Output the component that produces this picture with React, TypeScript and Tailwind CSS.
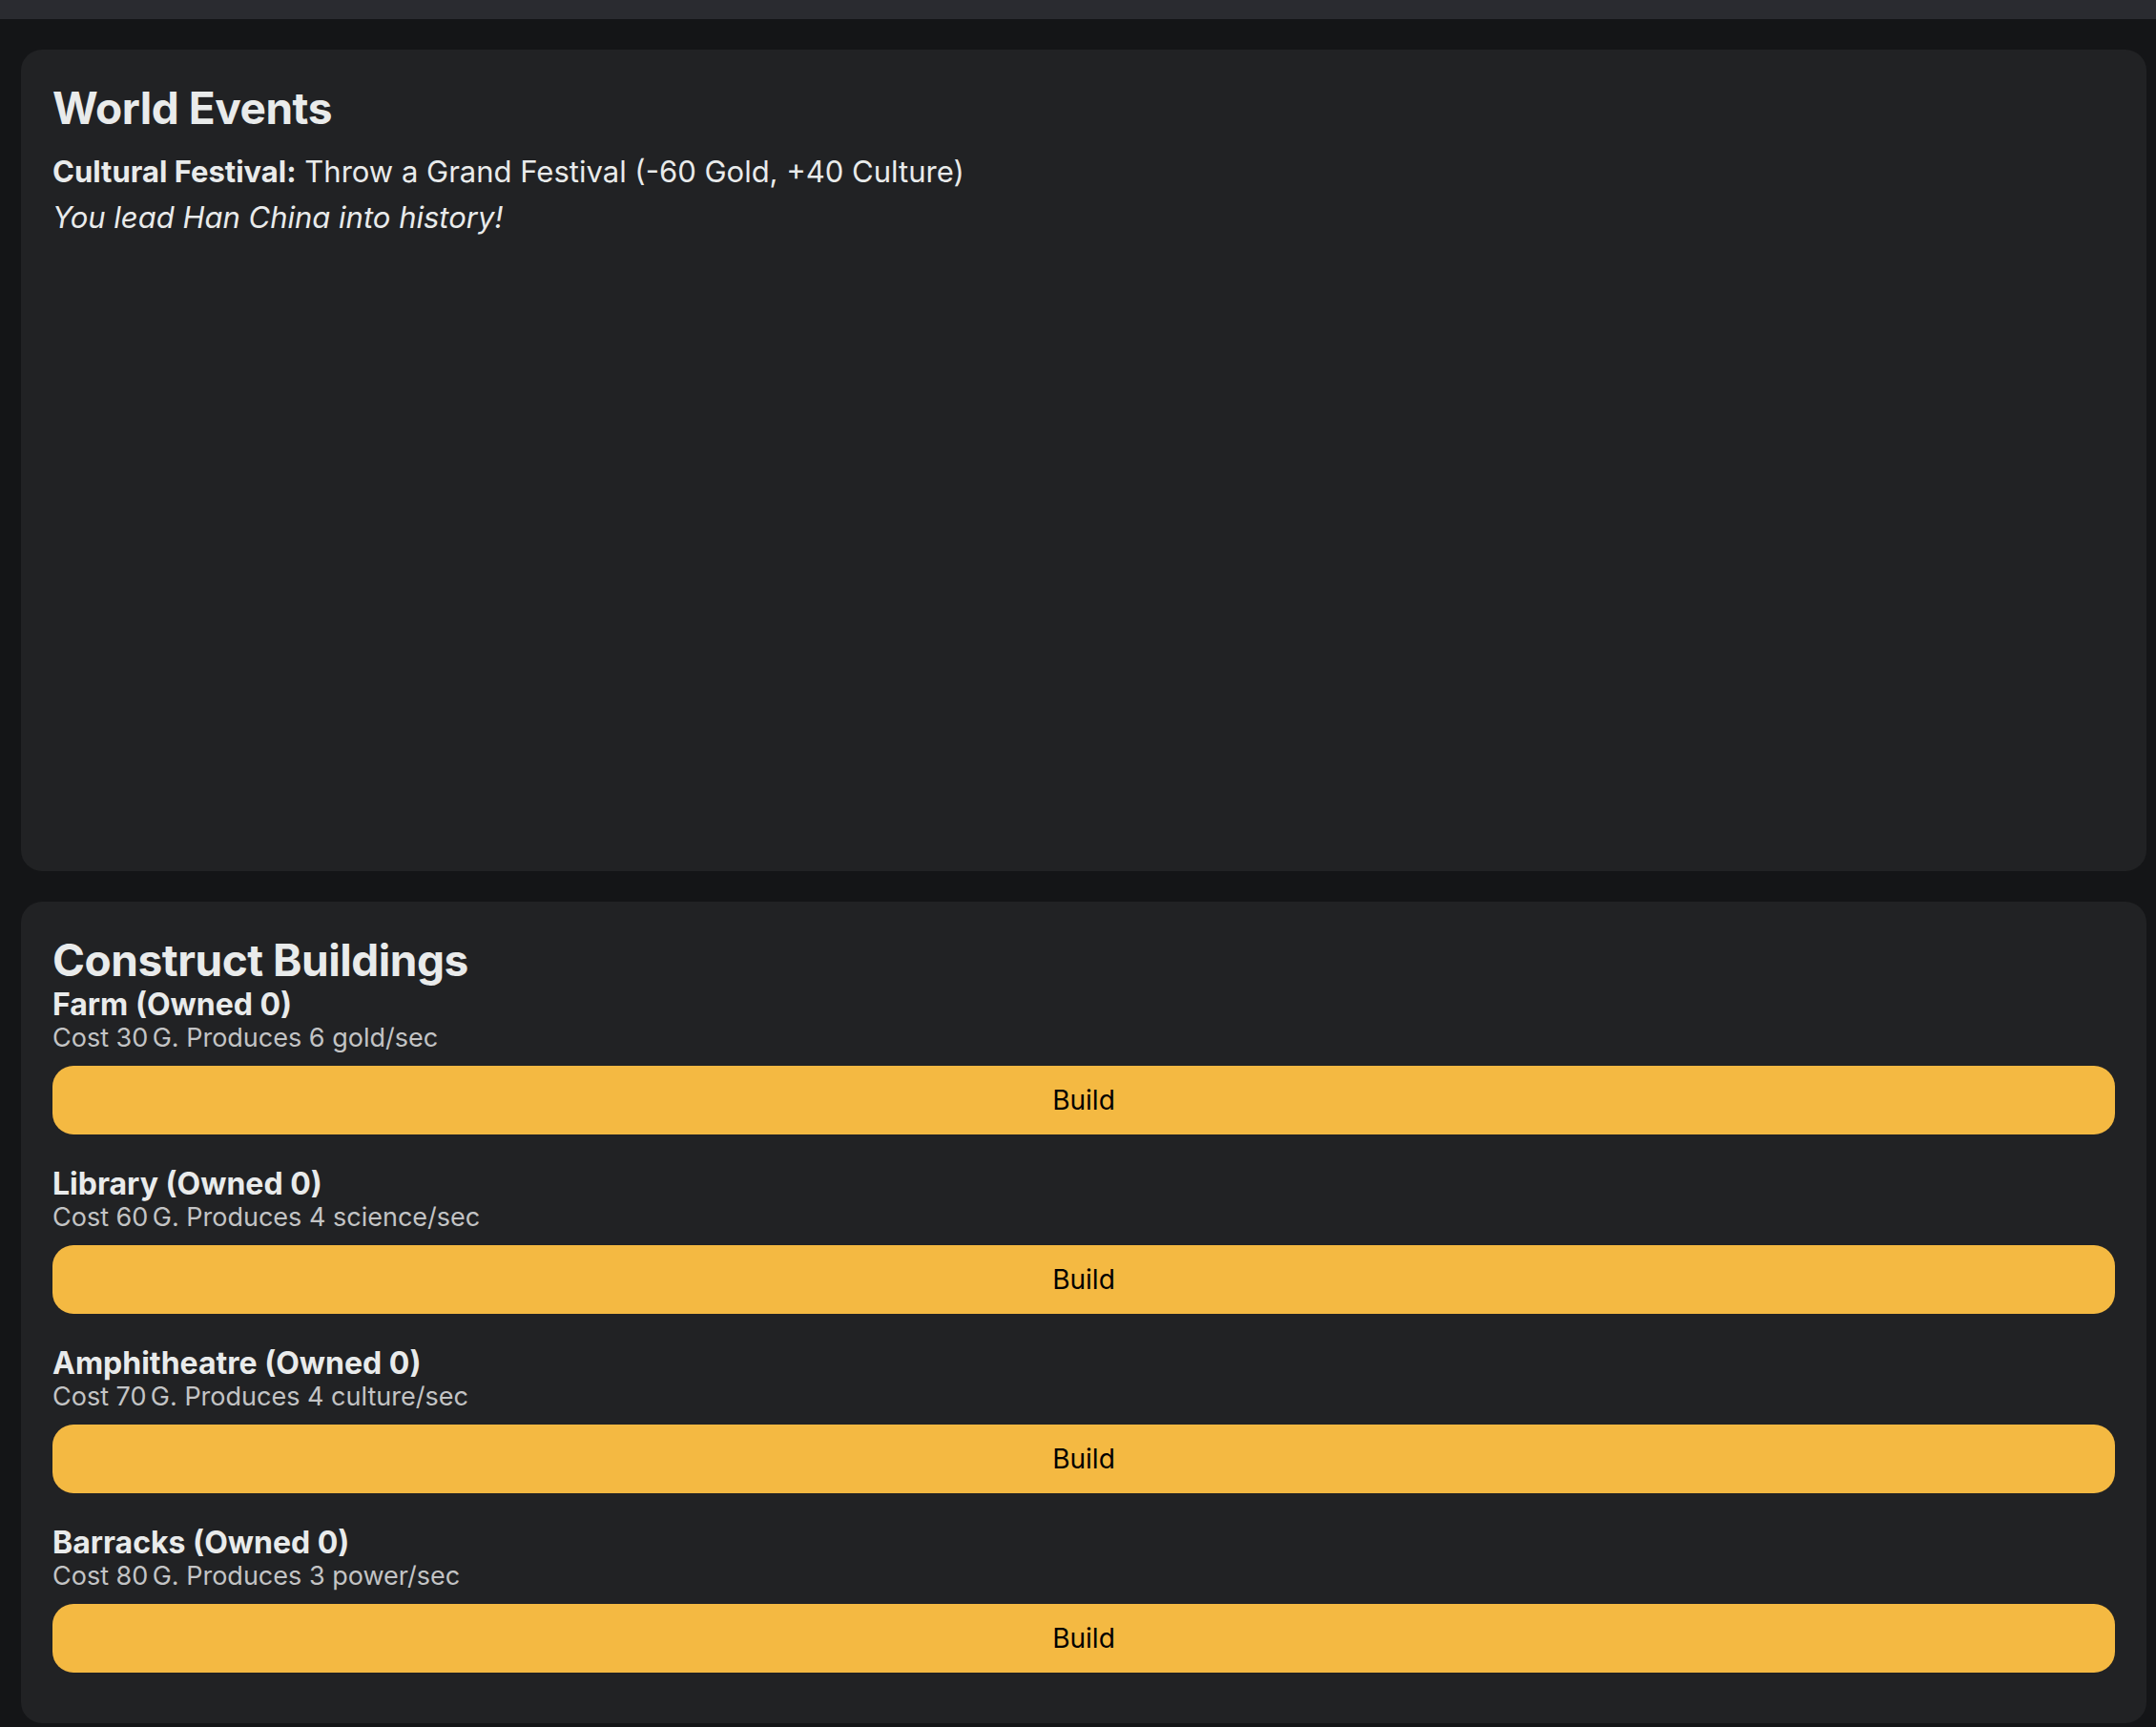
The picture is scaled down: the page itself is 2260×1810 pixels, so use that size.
const buildings = [
	{ name: "Farm", cost: 30, amount: 6, resource: "gold" },
	{ name: "Library", cost: 60, amount: 4, resource: "science" },
	{ name: "Amphitheatre", cost: 70, amount: 4, resource: "culture" },
	{ name: "Barracks", cost: 80, amount: 3, resource: "power" },
];

export default function App() {
	return (
		<div
			className="min-h-[1810px] bg-[#141517] text-[#e9ebeb]"
			style={{ fontFamily: "Inter, 'Noto Sans', sans-serif" }}
		>
			{/* top strip */}
			<div className="h-[20px] bg-[#2a2b30]" />

			<div className="flex flex-col gap-[32px] pt-[32px] pl-[22px] pr-[10px]">
				{/* World Events */}
				<section className="h-[861px] rounded-[22px] bg-[#212224] px-[33px] pt-[32px]">
					<h2 className="text-[46px] leading-[58px] font-bold tracking-[-0.01em]">
						World Events
					</h2>
					<div className="mt-[14px] text-[31px] leading-[48px]">
						<p>
							<span className="font-bold">Cultural Festival:</span> Throw a Grand
							Festival (-60 Gold, +40 Culture)
						</p>
						<p className="italic">You lead Han China into history!</p>
					</div>
				</section>

				{/* Construct Buildings */}
				<section className="rounded-[22px] bg-[#212224] px-[33px] pt-[32px] pb-[53px]">
					<h2 className="text-[46px] leading-[58px] font-bold tracking-[-0.01em]">
						Construct Buildings
					</h2>
					<div className="flex flex-col gap-[34px]">
						{buildings.map((b) => (
							<div key={b.name}>
								<div className="text-[32px] leading-[36px] font-bold">
									{b.name} (Owned 0)
								</div>
								<div className="text-[27px] leading-[34px] text-[#c3c4c5]">
									Cost {b.cost}
									<span className="tracking-[-0.12em]"> </span>G. Produces{" "}
									{b.amount} {b.resource}/sec
								</div>
								<button className="mt-[12px] flex h-[72px] w-full items-center justify-center rounded-[22px] bg-[#f4b942] text-[28px] text-black">
									Build
								</button>
							</div>
						))}
					</div>
				</section>
			</div>
		</div>
	);
}
